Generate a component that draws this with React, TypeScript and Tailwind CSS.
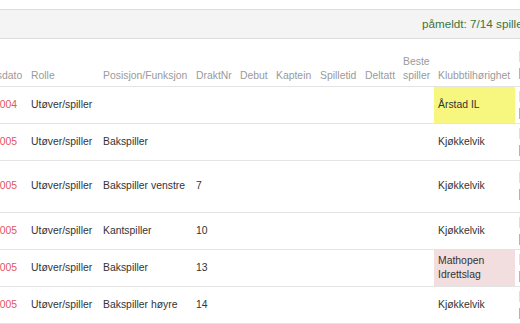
import React from "react";

type Row = {
  date: string;
  pos: string;
  nr: string;
  club: string;
  clubBg?: string;
  h: string;
};

const rows: Row[] = [
  { date: "12.03.2004", pos: "", nr: "", club: "Årstad IL", clubBg: "bg-[#f7f780]", h: "h-[37px]" },
  { date: "12.03.2005", pos: "Bakspiller", nr: "", club: "Kjøkkelvik", h: "h-[37px]" },
  { date: "12.03.2005", pos: "Bakspiller venstre", nr: "7", club: "Kjøkkelvik", h: "h-[52px]" },
  { date: "12.03.2005", pos: "Kantspiller", nr: "10", club: "Kjøkkelvik", h: "h-[37px]" },
  { date: "12.03.2005", pos: "Bakspiller", nr: "13", club: "Mathopen Idrettslag", clubBg: "bg-[#f2dede]", h: "h-[37px]" },
  { date: "12.03.2005", pos: "Bakspiller høyre", nr: "14", club: "Kjøkkelvik", h: "h-[37px]" },
];

function Marks() {
  return (
    <div className="flex flex-col gap-[6px]">
      <span className="block w-[2px] h-[11px] bg-[#fcd8b4]" />
      <span className="block w-[2px] h-[11px] bg-[#e9a769]" />
    </div>
  );
}

export default function App() {
  const th = "px-[4px] pb-[3px] align-bottom text-left font-normal text-[#9a9a9a] border-b border-[#e4e4e4]";
  const td = "px-[4px] align-middle text-left text-[#333] border-b border-[#e4e4e4]";
  return (
    <div className="w-[520px] h-[324px] overflow-hidden bg-white font-['Liberation_Sans',Arial,sans-serif]">
      <div className="pt-[9px]">
        <div className="h-[30px] border-y border-[#dddddd] bg-[#f4f4f4] pl-[422px] flex items-center whitespace-nowrap text-[11.7px] text-[#3c763d]">
          påmeldt: 7/14 spillere
        </div>
        <table className="ml-[-39px] w-[660px] table-fixed border-collapse text-[10.4px] leading-[14px]">
          <colgroup>
            <col className="w-[66px]" />
            <col className="w-[72px]" />
            <col className="w-[93px]" />
            <col className="w-[44px]" />
            <col className="w-[36px]" />
            <col className="w-[44px]" />
            <col className="w-[45px]" />
            <col className="w-[38px]" />
            <col className="w-[35px]" />
            <col className="w-[81px]" />
            <col className="w-[106px]" />
          </colgroup>
          <thead>
            <tr className="h-[47px]">
              <th className={th}>Fødselsdato</th>
              <th className={th}>Rolle</th>
              <th className={th}>Posisjon/Funksjon</th>
              <th className={th}>DraktNr</th>
              <th className={th}>Debut</th>
              <th className={th}>Kaptein</th>
              <th className={th}>Spilletid</th>
              <th className={th}>Deltatt</th>
              <th className={th}>Beste spiller</th>
              <th className={th}>Klubbtilhørighet</th>
              <th className="px-[4px] pb-[7px] align-bottom text-left font-normal border-b border-[#e4e4e4]">
                <Marks />
              </th>
            </tr>
          </thead>
          <tbody>
            {rows.map((r, i) => (
              <tr key={i} className={r.h}>
                <td className={`${td} text-[#e5545f] whitespace-nowrap`}>{r.date}</td>
                <td className={`${td} whitespace-nowrap`}>Utøver/spiller</td>
                <td className={`${td} whitespace-nowrap`}>{r.pos}</td>
                <td className={td}>{r.nr}</td>
                <td className={td}></td>
                <td className={td}></td>
                <td className={td}></td>
                <td className={td}></td>
                <td className={td}></td>
                <td className={`${td} ${r.clubBg ?? ""}`}>{r.club}</td>
                <td className={td}>
                  <Marks />
                </td>
              </tr>
            ))}
          </tbody>
        </table>
      </div>
    </div>
  );
}
